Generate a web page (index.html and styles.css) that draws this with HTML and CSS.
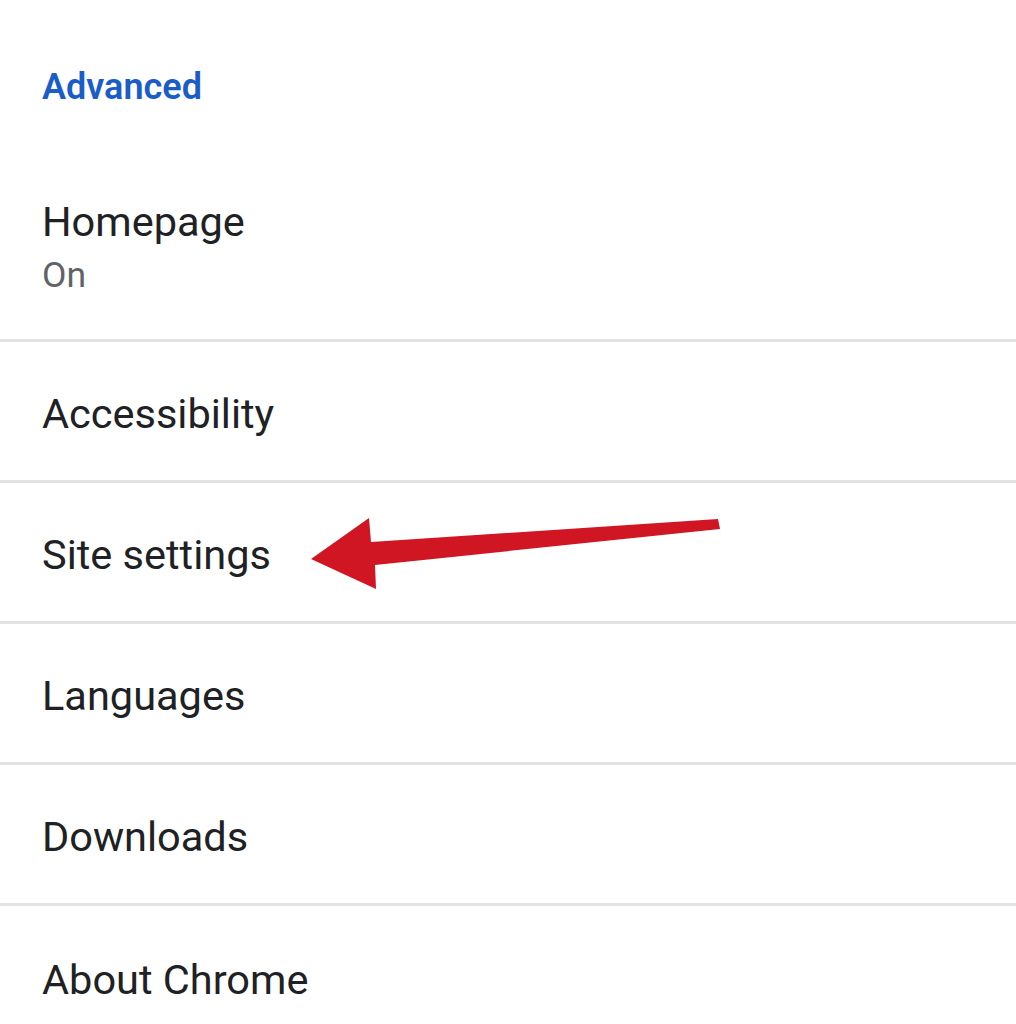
FILE: index.html
```html
<!DOCTYPE html>
<html>
<head>
<meta charset="utf-8">
<link rel="stylesheet" href="styles.css">
</head>
<body>
<div class="page">
  <div class="section-title">Advanced</div>
  <div class="item item-two">
    <div class="item-title">Homepage</div>
    <div class="item-sub">On</div>
  </div>
  <div class="item"><div class="item-title">Accessibility</div></div>
  <div class="item"><div class="item-title">Site settings</div></div>
  <div class="item"><div class="item-title">Languages</div></div>
  <div class="item"><div class="item-title">Downloads</div></div>
  <div class="item item-last"><div class="item-title">About Chrome</div></div>
  <svg class="arrow" width="1016" height="1024" viewBox="0 0 1016 1024">
    <polygon points="311,559 369,518 371,542 718,519 720,529 375,565 376,589" fill="#d01523"/>
  </svg>
</div>
</body>
</html>
```
FILE: styles.css
```css
html, body {
  margin: 0;
  padding: 0;
  background: #ffffff;
}
body {
  font-family: Roboto, "Noto Sans", "Liberation Sans", sans-serif;
  color: #202124;
  overflow: hidden;
}
.page {
  position: relative;
  width: 1016px;
  height: 1024px;
  overflow: hidden;
}
.section-title {
  padding: 67px 0 90px 42px;
  font-size: 36px;
  line-height: 40px;
  font-weight: 600;
  color: #1a5dc8;
}
.item {
  display: flex;
  flex-direction: column;
  justify-content: center;
  box-sizing: border-box;
  height: 141px;
  padding-left: 42px;
  padding-top: 6px;
  border-bottom: 3px solid #e3e3e3;
}
.item-two {
  height: auto;
  justify-content: flex-start;
  padding-top: 0;
  padding-bottom: 42px;
}
.item-title {
  font-size: 41.5px;
  line-height: 50px;
}
.item-sub {
  margin-top: 6px;
  font-size: 35.5px;
  line-height: 44px;
  color: #5f6368;
}
.item-last {
  border-bottom: none;
}
.arrow {
  position: absolute;
  left: 0;
  top: 0;
}
```
